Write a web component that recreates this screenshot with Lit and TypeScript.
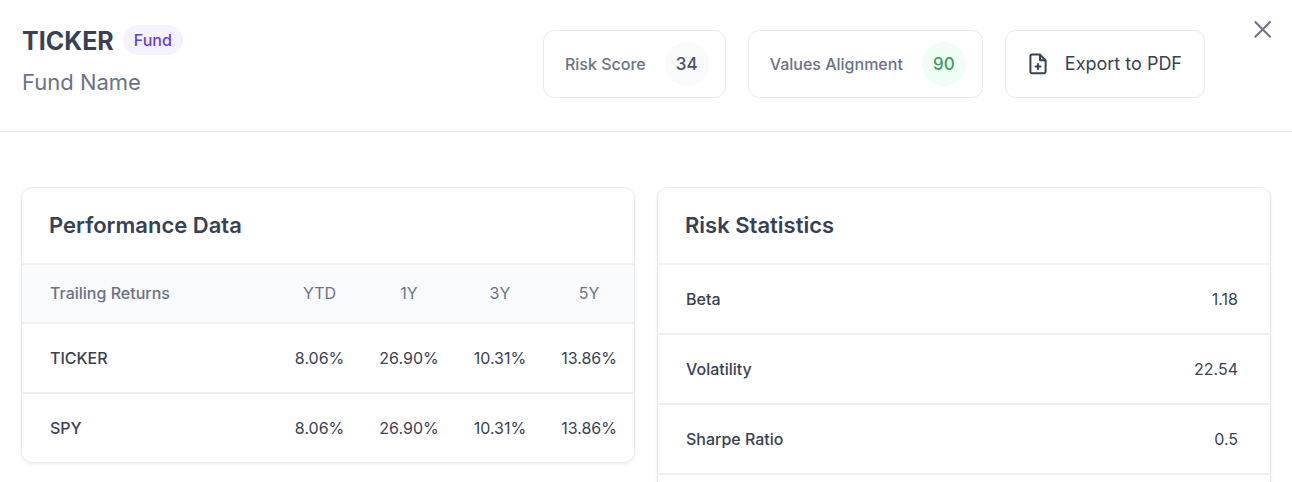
import { LitElement, html, css } from "lit";
import { customElement, property } from "lit/decorators.js";

const shared = css`
  * {
    box-sizing: border-box;
  }
  h1, h2, p {
    margin: 0;
  }
  button {
    font: inherit;
    color: inherit;
    background: none;
    border: 0;
    padding: 0;
    cursor: pointer;
  }
`;

@customElement("score-card")
class ScoreCard extends LitElement {
  @property() label = "";
  @property() score = "";
  @property() tone = "neutral";

  static styles = [
    shared,
    css`
      :host {
        display: flex;
        align-items: center;
        gap: 19px;
        padding: 11px 16px 11px 21px;
        border: 1px solid #e9eaf0;
        border-radius: 11px;
        font-size: 16px;
        line-height: 24px;
        font-weight: 500;
        color: #6b7287;
        white-space: nowrap;
      }
      .score {
        display: grid;
        place-items: center;
        width: 44px;
        height: 44px;
        border-radius: 50%;
        font-size: 17px;
      }
      .neutral {
        background: #f9fafc;
        color: #4a5265;
      }
      .good {
        background: #f0fdf4;
        color: #3f9a5c;
      }
    `,
  ];

  render() {
    return html`<span>${this.label}</span><span class="score ${this.tone}">${this.score}</span>`;
  }
}

@customElement("app-root")
class AppRoot extends LitElement {
  private periods = ["YTD", "1Y", "3Y", "5Y"];
  private returns = [
    { name: "TICKER", values: ["8.06%", "26.90%", "10.31%", "13.86%"] },
    { name: "SPY", values: ["8.06%", "26.90%", "10.31%", "13.86%"] },
  ];
  private stats = [
    ["Beta", "1.18"],
    ["Volatility", "22.54"],
    ["Sharpe Ratio", "0.5"],
  ];

  static styles = [
    shared,
    css`
      :host {
        display: block;
        height: 100vh;
        overflow: hidden;
        background: #fff;
        color: #384154;
        font-family: Inter, "Liberation Sans", sans-serif;
        font-size: 16px;
        line-height: 24px;
      }
      header {
        display: flex;
        align-items: flex-start;
        padding: 18px 17px 33px 22px;
        border-bottom: 1px solid #e8e8eb;
      }
      .identity {
        flex: 1;
        padding-top: 7px;
      }
      .title {
        display: flex;
        align-items: flex-start;
        gap: 9px;
      }
      h1 {
        font-size: 25px;
        line-height: 32px;
        font-weight: 700;
      }
      .badge {
        padding: 3px 11px;
        border-radius: 15px;
        background: #f5f3ff;
        color: #643de3;
        font-weight: 500;
      }
      .name {
        margin-top: 9px;
        font-size: 22px;
        line-height: 32px;
        color: #6b7287;
      }
      .actions {
        display: flex;
        gap: 22px;
        padding-top: 12px;
      }
      .export {
        display: flex;
        align-items: center;
        gap: 15px;
        padding: 0 22px 0 20px;
        border: 1px solid #e9eaf0;
        border-radius: 11px;
        font-size: 18px;
        white-space: nowrap;
      }
      .close {
        display: grid;
        margin-left: 46px;
        color: #6b7287;
      }
      main {
        display: grid;
        grid-template-columns: 1fr 1fr;
        align-items: start;
        gap: 22px;
        padding: 55px 21px;
      }
      .card {
        border: 1px solid #e9eaef;
        border-radius: 11px;
        overflow: hidden;
        box-shadow: 0 1px 3px rgba(0, 0, 0, 0.08);
      }
      h2 {
        padding: 21px 27px 22px;
        font-size: 22px;
        line-height: 32px;
        font-weight: 600;
      }
      table {
        width: 100%;
        border-collapse: separate;
        border-spacing: 0;
      }
      th, td {
        padding: 22px 17px 22px 18px;
        border-top: 2px solid #f0f0f4;
        font-weight: 400;
        text-align: center;
        white-space: nowrap;
      }
      thead th {
        padding-top: 16px;
        padding-bottom: 17px;
        background: #f9fafc;
        color: #6b7287;
      }
      th:first-child {
        width: 100%;
        padding-left: 28px;
        text-align: left;
        font-weight: 500;
      }
      .stats td {
        padding-right: 32px;
        text-align: right;
      }
    `,
  ];

  render() {
    return html`
      <header>
        <div class="identity">
          <div class="title">
            <h1>TICKER</h1>
            <span class="badge">Fund</span>
          </div>
          <p class="name">Fund Name</p>
        </div>
        <div class="actions">
          <score-card label="Risk Score" score="34"></score-card>
          <score-card label="Values Alignment" score="90" tone="good"></score-card>
          <button class="export">
            <svg width="24" height="24" viewBox="0 0 24 24" fill="none" stroke="currentColor" stroke-width="2" stroke-linecap="round" stroke-linejoin="round" aria-hidden="true">
              <path d="M12 12v5M9.5 14.5h5M17.8 21.3H6.2a1.8 1.8 0 0 1-1.8-1.8V4.4a1.8 1.8 0 0 1 1.8-1.8H14L19.6 8.2v11.3a1.8 1.8 0 0 1-1.8 1.8Z" />
              <path d="M14 3V8.2H19.2" />
            </svg>
            Export to PDF
          </button>
        </div>
        <button class="close" aria-label="Close">
          <svg width="24" height="24" viewBox="0 0 24 24" fill="none" stroke="currentColor" stroke-width="2" stroke-linecap="round" aria-hidden="true">
            <path d="M4.3 4l14.8 14.8M19.1 4l-14.8 14.8" />
          </svg>
        </button>
      </header>
      <main>
        <section class="card">
          <h2>Performance Data</h2>
          <table>
            <thead>
              <tr>
                <th scope="col">Trailing Returns</th>
                ${this.periods.map((p) => html`<th scope="col">${p}</th>`)}
              </tr>
            </thead>
            <tbody>
              ${this.returns.map(
                (r) => html`<tr>
                  <th scope="row">${r.name}</th>
                  ${r.values.map((v) => html`<td>${v}</td>`)}
                </tr>`
              )}
            </tbody>
          </table>
        </section>
        <section class="card">
          <h2>Risk Statistics</h2>
          <table class="stats">
            <tbody>
              ${this.stats.map(
                ([name, value]) => html`<tr>
                  <th scope="row">${name}</th>
                  <td>${value}</td>
                </tr>`
              )}
              <tr>
                <th scope="row"></th>
                <td></td>
              </tr>
            </tbody>
          </table>
        </section>
      </main>
    `;
  }
}
